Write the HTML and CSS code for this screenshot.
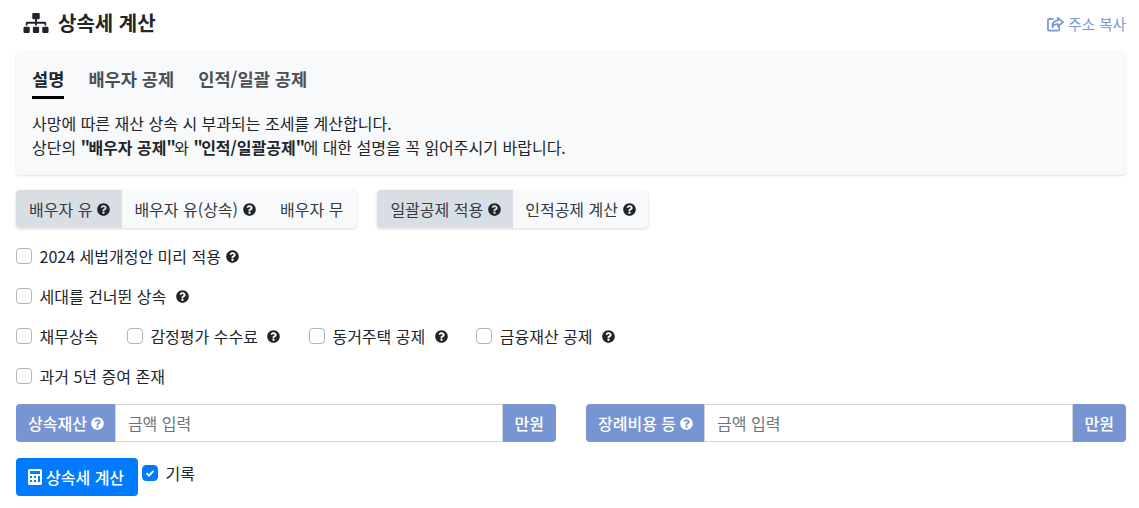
FILE: index.html
```html
<!DOCTYPE html>
<html lang="ko">
<head>
<meta charset="utf-8">
<title>상속세 계산</title>
<link rel="stylesheet" href="styles.css">
</head>
<body>
<svg class="defs" width="0" height="0" aria-hidden="true">
  <symbol id="q" viewBox="0 0 512 512"><path fill="currentColor" d="M504 256c0 136.997-111.043 248-248 248S8 392.997 8 256C8 119.083 119.043 8 256 8s248 111.083 248 248zM262.655 90c-54.497 0-89.255 22.957-116.549 63.758-3.536 5.286-2.353 12.415 2.715 16.258l34.699 26.31c5.205 3.947 12.621 3.008 16.665-2.122 17.864-22.658 30.113-35.797 57.303-35.797 20.429 0 45.698 13.148 45.698 32.958 0 14.976-12.363 22.667-32.534 33.976C247.128 238.528 216 254.941 216 296v4c0 6.627 5.373 12 12 12h56c6.627 0 12-5.373 12-12v-1.333c0-28.462 83.186-29.647 83.186-106.667 0-58.002-60.165-102-116.531-102zM256 338c-25.365 0-46 20.635-46 46 0 25.364 20.635 46 46 46s46-20.636 46-46c0-25.365-20.635-46-46-46z"/></symbol>
</svg>
<main class="page">
  <header class="head">
    <h1 class="title">
      <svg class="ic-site" viewBox="0 0 640 512"><path fill="currentColor" d="M128 352H32c-17.67 0-32 14.33-32 32v96c0 17.67 14.33 32 32 32h96c17.67 0 32-14.33 32-32v-96c0-17.67-14.33-32-32-32zm-24-80h192v48h48v-48h192v48h48v-57.59c0-21.17-17.23-38.41-38.41-38.41H344v-64h40c17.67 0 32-14.33 32-32V32c0-17.67-14.33-32-32-32H256c-17.67 0-32 14.33-32 32v96c0 17.67 14.33 32 32 32h40v64H94.41C73.23 224 56 241.23 56 262.41V320h48v-48zm264 80h-96c-17.67 0-32 14.33-32 32v96c0 17.67 14.33 32 32 32h96c17.67 0 32-14.33 32-32v-96c0-17.67-14.33-32-32-32zm240 0h-96c-17.67 0-32 14.33-32 32v96c0 17.67 14.33 32 32 32h96c17.67 0 32-14.33 32-32v-96c0-17.67-14.33-32-32-32z"/></svg>
      <span>상속세 계산</span>
    </h1>
    <a class="copy" href="#">
      <svg class="ic-share" viewBox="0 0 18 16"><path fill="none" stroke="currentColor" stroke-width="1.8" d="M7 2.5H2.5a1.5 1.5 0 0 0-1.500 1.500v9.500a1.500 1.500 0 0 0 1.500 1.500h9a1.500 1.500 0 0 0 1.500-1.500V10"/><path fill="none" stroke="currentColor" stroke-width="1.800" stroke-linejoin="round" d="M11.500 1.500 17 6l-5.500 4.500V8C8 8 6.500 9 6 11.500 5 7.500 7.500 4.500 11.500 4.200z"/></svg>
      <span>주소 복사</span>
    </a>
  </header>

  <section class="panel">
    <nav class="tabs">
      <span class="tab active">설명</span>
      <span class="tab">배우자 공제</span>
      <span class="tab">인적/일괄 공제</span>
    </nav>
    <p class="desc">사망에 따른 재산 상속 시 부과되는 조세를 계산합니다.<br>상단의 <b><span class="qt">"</span>배우자 공제<span class="qt">"</span></b>와 <b><span class="qt">"</span>인적/일괄공제<span class="qt">"</span></b>에 대한 설명을 꼭 읽어주시기 바랍니다.</p>
  </section>

  <div class="groups">
    <div class="btn-group">
      <span class="seg on">배우자 유<svg class="q"><use href="#q"/></svg></span>
      <span class="seg">배우자 유(상속)<svg class="q"><use href="#q"/></svg></span>
      <span class="seg seg-end">배우자 무</span>
    </div>
    <div class="btn-group">
      <span class="seg on">일괄공제 적용<svg class="q"><use href="#q"/></svg></span>
      <span class="seg">인적공제 계산<svg class="q"><use href="#q"/></svg></span>
    </div>
  </div>

  <div class="row"><label class="check"><span class="box"></span>2024 세법개정안 미리 적용<svg class="q q-near"><use href="#q"/></svg></label></div>
  <div class="row"><label class="check"><span class="box"></span>세대를 건너뛴 상속<svg class="q q-far"><use href="#q"/></svg></label></div>
  <div class="row">
    <label class="check"><span class="box"></span>채무상속</label>
    <label class="check"><span class="box"></span>감정평가 수수료<svg class="q q-far"><use href="#q"/></svg></label>
    <label class="check"><span class="box"></span>동거주택 공제<svg class="q q-far"><use href="#q"/></svg></label>
    <label class="check"><span class="box"></span>금융재산 공제<svg class="q q-far"><use href="#q"/></svg></label>
  </div>
  <div class="row"><label class="check"><span class="box"></span>과거 5년 증여 존재</label></div>

  <div class="inputs">
    <div class="field">
      <span class="addon">상속재산<svg class="q"><use href="#q"/></svg></span>
      <input class="amount" type="text" placeholder="금액 입력">
      <span class="addon">만원</span>
    </div>
    <div class="field">
      <span class="addon">장례비용 등<svg class="q"><use href="#q"/></svg></span>
      <input class="amount" type="text" placeholder="금액 입력">
      <span class="addon">만원</span>
    </div>
  </div>

  <div class="actions">
    <button class="submit" type="button">
      <svg class="ic-calc" viewBox="0 0 14 16"><path fill="currentColor" fill-rule="evenodd" d="M1.500 0h11A1.500 1.500 0 0 1 14 1.500v13a1.500 1.500 0 0 1-1.500 1.500h-11A1.500 1.500 0 0 1 0 14.500v-13A1.500 1.500 0 0 1 1.500 0zM2 2v3h10V2zM2 7v2h2V7zm4 0v2h2V7zm4 0v6h2V7zM2 11v2h2v-2zm4 0v2h2v-2z"/></svg>
      상속세 계산
    </button>
    <label class="check record"><span class="box checked"><svg viewBox="0 0 16 16"><path fill="none" stroke="#fff" stroke-width="2.200" d="M4 8.200 6.800 11 12 5.500"/></svg></span>기록</label>
  </div>
</main>
</body>
</html>
```
FILE: styles.css
```css
* { box-sizing: border-box; }
html, body { margin: 0; padding: 0; }
body {
  background: #fff;
  color: #212529;
  font-family: "Noto Sans CJK KR", "Noto Sans", sans-serif;
  font-size: 16px;
  line-height: 24px;
}
.defs { position: absolute; }
.page { padding: 0 13px 0 16px; }

.head {
  height: 51px;
  display: flex;
  justify-content: space-between;
  align-items: flex-start;
}
.title {
  margin: 9px 0 0 7px;
  display: flex;
  align-items: center;
  gap: 9px;
  font-size: 20px;
  line-height: 28px;
  font-weight: 700;
}
.ic-site { width: 26px; height: 20px; }
.copy {
  margin-top: 12px;
  display: flex;
  align-items: center;
  gap: 4px;
  color: #7695d2;
  font-size: 14.600px;
  text-decoration: none;
}
.ic-share { width: 17px; height: 16px; }

.panel {
  height: 124px;
  padding: 12px 16px 0;
  background: #f8f9fa;
  border-radius: 4px;
  box-shadow: 0 1px 2px rgba(0, 0, 0, .12);
}
.tabs { display: flex; gap: 24px; }
.tab {
  height: 36px;
  font-size: 17.600px;
  line-height: 32px;
  font-weight: 700;
  color: #495057;
}
.tab.active { color: #212529; border-bottom: 3px solid #000; }
.desc { margin: 12px 0 0; }
.desc b { font-weight: 700; }
.qt { letter-spacing: -1.500px; }

.groups { margin-top: 15px; display: flex; gap: 20px; }
.btn-group {
  display: flex;
  height: 38px;
  border-radius: 4px;
  overflow: hidden;
  box-shadow: 0 1px 3px rgba(0, 0, 0, .15);
  background: #f8f9fa;
}
.seg {
  display: flex;
  align-items: center;
  gap: 5px;
  padding: 0 12px;
  color: #343a40;
}
.seg:first-child { padding-left: 13px; }
.seg-end { padding-right: 14px; }
.seg.on { background: #d9dee5; }
.q { width: 13px; height: 13px; flex: none; color: #212529; }
.addon .q { color: #fff; }

.row {
  height: 40px;
  display: flex;
  align-items: center;
  gap: 28.500px;
}
.groups + .row { margin-top: 8px; }
.check { display: flex; align-items: center; color: #212529; }
.box {
  width: 16px;
  height: 16px;
  margin-right: 7.500px;
  background: #fff;
  border: 1px solid #adb5bd;
  border-radius: 4px;
  flex: none;
}
.q-near { margin-left: 5.500px; }
.q-far { margin-left: 9.500px; }

.inputs { margin-top: 8px; display: flex; gap: 30px; }
.field { display: flex; height: 38px; flex: 1 1 0; }
.addon {
  display: flex;
  align-items: center;
  gap: 4px;
  padding: 0 12px;
  background: #7695d2;
  color: #fff;
  font-weight: 500;
  flex: none;
}
.addon:first-child { padding-right: 11px; border-radius: 4px 0 0 4px; }
.addon:last-child { border-radius: 0 4px 4px 0; }
.amount {
  flex: 1;
  min-width: 0;
  padding: 0 12px;
  border: 1px solid #ced4da;
  border-radius: 0;
  font: inherit;
  color: #495057;
  outline: none;
}
.amount::placeholder { color: #6c757d; opacity: 1; }

.actions { margin-top: 16px; display: flex; align-items: flex-start; }
.submit {
  height: 38px;
  padding: 0 13.500px 0 12px;
  display: flex;
  align-items: center;
  gap: 4px;
  background: #007bff;
  color: #fff;
  border: 0;
  border-radius: 4px;
  font: inherit;
  font-weight: 500;
}
.ic-calc { width: 14px; height: 16px; }
.record { margin: 3px 0 0 4px; }
.record .box { margin-right: 8px; }
.box.checked { background: #007bff; border-color: #007bff; display: flex; }
.box.checked svg { width: 14px; height: 14px; }
```
